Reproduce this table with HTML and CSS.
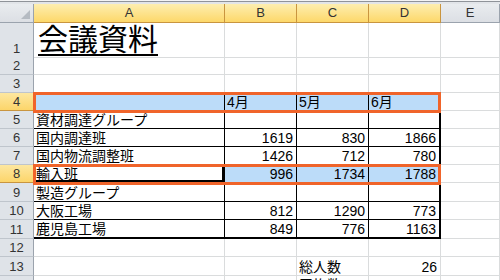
FILE: index.html
```html
<!DOCTYPE html>
<html lang="ja">
<head>
<meta charset="utf-8">
<title>会議資料</title>
<link rel="stylesheet" href="styles.css">
</head>
<body>
<div class="topbar"></div>
<div class="sheet">
  <div class="row hdr">
    <div class="corner"><span class="tri"></span></div>
    <div class="ch sel">A</div>
    <div class="ch sel">B</div>
    <div class="ch sel">C</div>
    <div class="ch sel">D</div>
    <div class="ch">E</div>
  </div>
  <div class="row r1">
    <div class="rh">1</div>
    <div class="c title"><span>会議資料</span></div>
    <div class="c"></div><div class="c"></div><div class="c"></div><div class="c"></div>
  </div>
  <div class="row">
    <div class="rh">2</div>
    <div class="c"></div><div class="c"></div><div class="c"></div><div class="c"></div><div class="c"></div>
  </div>
  <div class="row">
    <div class="rh">3</div>
    <div class="c"></div><div class="c"></div><div class="c"></div><div class="c"></div><div class="c"></div>
  </div>
  <div class="row mark">
    <div class="rh rsel">4</div>
    <div class="c blue vr"></div>
    <div class="c blue vr">4月</div>
    <div class="c blue vr">5月</div>
    <div class="c blue vr">6月</div>
    <div class="c"></div>
    <div class="hl"></div>
  </div>
  <div class="row">
    <div class="rh">5</div>
    <div class="c tb">資材調達グループ</div>
    <div class="c tb"></div><div class="c tb"></div><div class="c tb tr2"></div>
    <div class="c"></div>
  </div>
  <div class="row">
    <div class="rh">6</div>
    <div class="c tb">国内調達班</div>
    <div class="c tb num">1619</div><div class="c tb num">830</div><div class="c tb tr2 num">1866</div>
    <div class="c"></div>
  </div>
  <div class="row">
    <div class="rh">7</div>
    <div class="c tb">国内物流調整班</div>
    <div class="c tb num">1426</div><div class="c tb num">712</div><div class="c tb tr2 num">780</div>
    <div class="c"></div>
  </div>
  <div class="row mark">
    <div class="rh rsel">8</div>
    <div class="c tb active">輸入班</div>
    <div class="c tb blue num">996</div><div class="c tb blue num">1734</div><div class="c tb tr2 blue num">1788</div>
    <div class="c"></div>
    <div class="hl"></div>
  </div>
  <div class="row tall">
    <div class="rh">9</div>
    <div class="c tb">製造グループ</div>
    <div class="c tb"></div><div class="c tb"></div><div class="c tb tr2"></div>
    <div class="c"></div>
  </div>
  <div class="row tall">
    <div class="rh">10</div>
    <div class="c tb">大阪工場</div>
    <div class="c tb num">812</div><div class="c tb num">1290</div><div class="c tb tr2 num">773</div>
    <div class="c"></div>
  </div>
  <div class="row tall">
    <div class="rh">11</div>
    <div class="c tb bb2">鹿児島工場</div>
    <div class="c tb bb2 num">849</div><div class="c tb bb2 num">776</div><div class="c tb tr2 bb2 num">1163</div>
    <div class="c"></div>
  </div>
  <div class="row tall">
    <div class="rh">12</div>
    <div class="c"></div><div class="c"></div><div class="c"></div><div class="c"></div><div class="c"></div>
  </div>
  <div class="row tall">
    <div class="rh">13</div>
    <div class="c"></div><div class="c"></div>
    <div class="c">総人数</div>
    <div class="c num">26</div>
    <div class="c"></div>
  </div>
  <div class="row">
    <div class="rh">14</div>
    <div class="c"></div><div class="c"></div>
    <div class="c">平均数</div>
    <div class="c num"></div>
    <div class="c"></div>
  </div>
</div>
</body>
</html>
```

FILE: styles.css
```css
html, body {
  margin: 0;
  padding: 0;
}

body {
  width: 500px;
  height: 280px;
  overflow: hidden;
  background: #ffffff;
  font-family: "Liberation Sans", "Noto Sans CJK JP", sans-serif;
  color: #000;
}

.topbar {
  height: 4px;
  background: linear-gradient(#f3f4f5 0 1px, #8f9399 1px 2px, #e2e5e9 2px);
}

.sheet {
  display: flex;
  flex-direction: column;
}

.row {
  display: grid;
  grid-template-columns: 34px 191px 72px 72px 72px 1fr;
  height: 18px;
  flex: none;
}

.row.hdr {
  height: 19px;
}

.row.r1 {
  height: 34px;
}

.row.tall {
  height: 18.6px;
}

.row.mark {
  position: relative;
}

/* header cells */
.corner,
.ch,
.rh {
  box-sizing: border-box;
  display: flex;
  font-size: 13px;
  color: #333;
  background: linear-gradient(#e9ecef, #dcdfe4);
}

.corner {
  border-right: 1px solid #9ba3ad;
  border-bottom: 1px solid #9ba3ad;
  justify-content: flex-end;
  align-items: flex-end;
  padding: 0 3px 3px 0;
}

.tri {
  width: 0;
  height: 0;
  border-left: 9px solid transparent;
  border-bottom: 9px solid #b5bbc2;
}

.ch {
  border-right: 1px solid #9ba3ad;
  border-bottom: 1px solid #9ba3ad;
  align-items: center;
  justify-content: center;
  line-height: 16px;
}

.ch.sel {
  background: linear-gradient(#fdeeb0, #fdd86a);
  border-right-color: #c9953f;
  border-bottom-color: #c9953f;
}

.rh {
  background: #dfe3e8;
  border-right: 1px solid #9ba3ad;
  border-bottom: 1px solid #bfc5cc;
  align-items: flex-end;
  justify-content: center;
  line-height: 16px;
}

.rh.rsel {
  background: linear-gradient(#fde7a0, #fcd56a);
  border-bottom-color: #c9953f;
}

/* data cells */
.c {
  box-sizing: border-box;
  min-width: 0;
  overflow: hidden;
  white-space: nowrap;
  display: flex;
  align-items: flex-end;
  padding: 0 2px;
  font-size: 14px;
  line-height: 16px;
  border-right: 1px solid #dadcdd;
  border-bottom: 1px solid #dadcdd;
}

.c.num {
  justify-content: flex-end;
  padding-right: 3px;
}

.c.title {
  padding-left: 4px;
  font-size: 30px;
  line-height: 34px;
  overflow: visible;
}

.c.title span {
  text-decoration: underline;
  text-decoration-thickness: 2px;
  text-underline-offset: 4px;
}

.c.blue {
  background: #bcdcf9;
}

.c.vr {
  border-right-color: #000;
}

.c.tb {
  border-right-color: #000;
  border-bottom-color: #000;
}

.c.tr2 {
  border-right-width: 2px;
}

.c.bb2 {
  border-bottom-width: 2px;
}

.c.active {
  box-shadow: inset 0 0 0 2px #000;
}

/* selection outlines */
.hl {
  position: absolute;
  left: 33px;
  top: -1px;
  width: 408px;
  height: 21px;
  box-sizing: border-box;
  border: 3px solid #f0642a;
  pointer-events: none;
}
```
